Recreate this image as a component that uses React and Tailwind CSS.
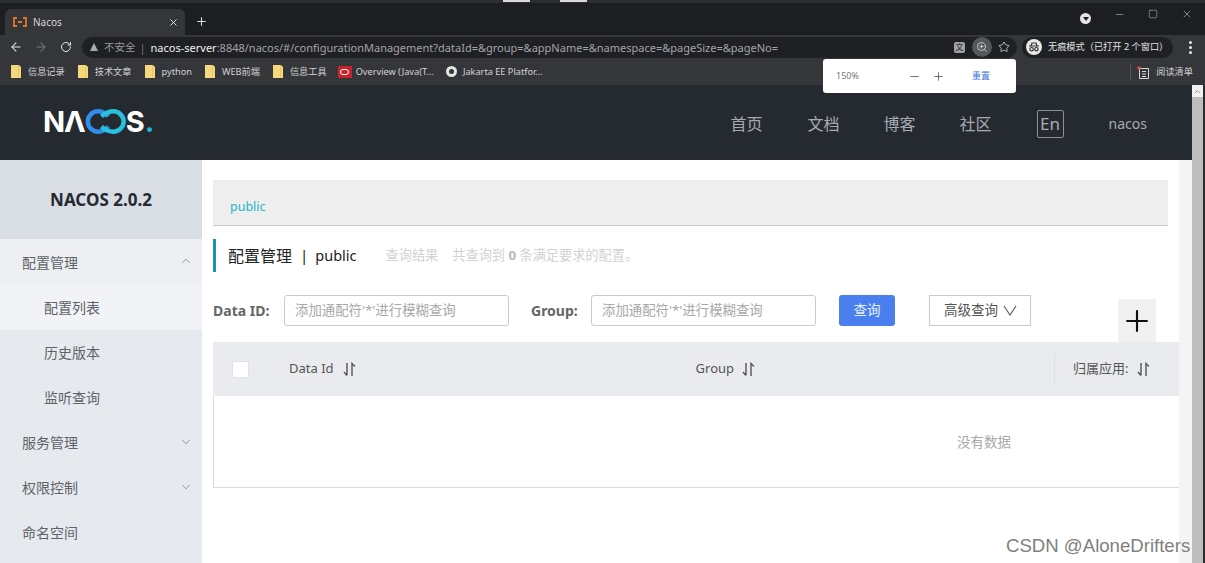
import React from "react";
import { ArrowLeft, ArrowRight, RotateCw, Star, ZoomIn, Minus, Plus, X, Square, ChevronUp, ChevronDown } from "lucide-react";

const font = "font-['Noto_Sans','Noto_Sans_CJK_SC',sans-serif]";

function Sort() {
  return (
    <svg width="13" height="15" viewBox="0 0 13 15" fill="none" stroke="#555" strokeWidth="1.4">
      <path d="M4 1v12M1 10l3 3.5" />
      <path d="M9 14V1.5l3 3" />
    </svg>
  );
}

function Bookmark({ label }) {
  return (
    <div className="flex items-center gap-[7px]">
      <svg width="10" height="13" viewBox="0 0 10 13"><path d="M0 0h8l2 2v11H0z" fill="#f5d77e" /><path d="M7 0h1v13H7z" fill="#e8c45f" /></svg>
      <span>{label}</span>
    </div>
  );
}

function SideItem({ label, sub, icon, className = "" }) {
  return (
    <div className={`h-[45px] flex items-center justify-between pr-[9px] text-[14px] text-[#5f6368] ${sub ? "pl-[44px]" : "pl-[22px]"} ${className}`}>
      <span>{label}</span>
      {icon === "up" && <ChevronUp size={14} strokeWidth={1.1} className="text-[#666] -mt-[2px]" />}
      {icon === "down" && <ChevronDown size={14} strokeWidth={1.1} className="text-[#666] -mt-[2px]" />}
    </div>
  );
}

export default function App() {
  return (
    <div className={`relative h-[563px] w-[1205px] overflow-hidden bg-white ${font}`}>
      {/* tab strip */}
      <div className="relative h-[35px] bg-[#1d1e22] border-t-[3px] border-[#2c2d31] flex items-end pl-[5px]">
        <div className="w-[180px] h-[26px] bg-[#35363a] rounded-t-[6px] flex items-center pl-[8px] pr-[6px] text-[#d5d6d8] text-[10px]">
          <svg width="14" height="10" viewBox="0 0 14 10" fill="none" stroke="#e0762f" strokeWidth="1.8"><path d="M4 1H1v8h3M10 1h3v8h-3M5 5h4" /></svg>
          <span className="ml-[6px]">Nacos</span>
          <X size={11} strokeWidth={2} className="ml-auto text-[#e8e8e8]" />
        </div>
        <Plus size={13} strokeWidth={2} className="ml-[10px] mb-[7px] text-[#e2e2e2]" />
        <div className="ml-auto flex items-center gap-[23px] pr-[12px] mb-[11px] text-[#c8c8c8]">
          <div className="w-[11px] h-[11px] rounded-full bg-[#e4e4e4] flex items-center justify-center mt-[9px]">
            <div className="w-0 h-0 border-x-[3px] border-x-transparent border-t-[4px] border-t-[#1d1e22]" />
          </div>
          <Minus size={11} strokeWidth={1.2} />
          <Square size={10} strokeWidth={1.2} />
          <X size={12} strokeWidth={1.2} />
        </div>
      </div>
      {/* toolbar */}
      <div className="h-[24px] bg-[#35363a] flex items-center pl-[9px] pr-[13px]">
        <ArrowLeft size={14} strokeWidth={1.8} className="text-[#e8e8e8]" />
        <ArrowRight size={14} strokeWidth={1.8} className="ml-[11px] text-[#77797d]" />
        <RotateCw size={12} strokeWidth={2} className="ml-[12px] text-[#e8e8e8]" />
        <div className="ml-[10px] w-[935px] h-[21px] rounded-full bg-[#1f2024] flex items-center pl-[8px] pr-[7px] text-[11px] leading-none">
          <div className="w-0 h-0 border-x-[4px] border-x-transparent border-b-[8px] border-b-[#a9abaf]" />
          <span className="ml-[6px] text-[#9a9ca0] text-[10.500px]">不安全</span>
          <span className="ml-[4px] text-[#74767a]">|</span>
          <span className="ml-[5px] text-[#f0f0f0]">nacos-server</span>
          <span className="text-[#a3a5a9]">:8848/nacos/#/configurationManagement?dataId=&amp;group=&amp;appName=&amp;namespace=&amp;pageSize=&amp;pageNo=</span>
          <span className="ml-auto w-[11px] h-[11px] rounded-[2px] bg-[#9fa1a5] text-[#1f2024] text-[8px] flex items-center justify-center">文</span>
          <span className="ml-[7px] w-[20px] h-[20px] rounded-full bg-[#55575b] flex items-center justify-center">
            <ZoomIn size={12} strokeWidth={1.5} className="text-[#e0e0e0]" />
          </span>
          <Star size={12} strokeWidth={1.5} className="ml-[6px] text-[#e0e0e0]" />
        </div>
        <div className="ml-[5px] w-[151px] h-[21px] rounded-full bg-[#1f2024] flex items-center pl-[4px] text-[9.200px] text-[#e2e2e2]">
          <span className="w-[16px] h-[16px] rounded-full bg-[#e8e8e8] flex items-center justify-center">
            <svg width="12" height="10" viewBox="0 0 12 10" fill="none" stroke="#333" strokeWidth="1.2"><path d="M1 4h10M3 4l1-3h4l1 3" /><circle cx="3.6" cy="7.2" r="1.7" /><circle cx="8.4" cy="7.2" r="1.7" /></svg>
          </span>
          <span className="ml-[6px] whitespace-nowrap">无痕模式（已打开 2 个窗口）</span>
        </div>
        <div className="ml-auto flex flex-col gap-[2px]">
          <span className="w-[3px] h-[3px] bg-[#e8e8e8] rounded-full" />
          <span className="w-[3px] h-[3px] bg-[#e8e8e8] rounded-full" />
          <span className="w-[3px] h-[3px] bg-[#e8e8e8] rounded-full" />
        </div>
      </div>
      {/* bookmarks */}
      <div className="h-[26px] bg-[#35363a] flex items-center pl-[11px] pr-[12px] text-[9.200px] text-[#d2d3d5]">
        <div className="flex items-center gap-[13px]">
          <Bookmark label="信息记录" />
          <Bookmark label="技术文章" />
          <Bookmark label="python" />
          <Bookmark label="WEB前端" />
          <Bookmark label="信息工具" />
        </div>
        <div className="ml-[11px] flex items-center gap-[4px]">
          <span className="w-[14px] h-[12px] bg-[#c8242b] flex items-center justify-center">
            <span className="w-[9px] h-[6px] rounded-full border-[1.5px] border-white" />
          </span>
          <span>Overview (Java(T...</span>
        </div>
        <div className="ml-[12px] flex items-center gap-[6px]">
          <span className="w-[11px] h-[11px] rounded-full bg-[#e4e4e4] flex items-center justify-center">
            <span className="w-[5px] h-[5px] rounded-full bg-[#35363a]" />
          </span>
          <span>Jakarta EE Platfor...</span>
        </div>
        <div className="ml-auto flex items-center h-[16px] border-l border-[#55575b] pl-[6px]">
          <svg width="13" height="13" viewBox="0 0 13 13" fill="none" stroke="#d8d8d8" strokeWidth="1"><path d="M2.500 2.500h9v10h-9zM5 5.500h4M5 8h4M5 10.500h4" /><circle cx="2" cy="2" r="1.700" fill="#d9534f" stroke="none" /></svg>
          <span className="ml-[6px]">阅读清单</span>
        </div>
      </div>
      {/* page */}
      <div className="flex h-[478px]">
        <div className="flex-1 min-w-0 flex flex-col">
          <header className="h-[75px] shrink-0 bg-[#252a31] flex items-center pl-[43px] pr-[45px]">
            <div className="flex items-center text-white text-[29px] font-bold leading-none font-['Inter',sans-serif] -mt-[2px]">
              <span>N</span>
              <span className="-ml-[1px]">Λ</span>
              <svg width="42" height="25" viewBox="0 0 36 22" fill="none" strokeWidth="4" className="-ml-[1px]">
                <path d="M20 6.500C17 3 14 2 11 2a9 9 0 0 0 0 18c3 0 6-1 9-4.500" stroke="#2f8fe8" />
                <path d="M14 15.500C18 19 21 20 24.500 20a9 9 0 0 0 0-18C21 2 18 3 14 6.500" stroke="#28c0de" />
              </svg>
              <span className="-ml-[1px]">S</span>
              <span className="text-[#1fb8d8]">.</span>
            </div>
            <nav className="ml-auto mt-[2px] flex items-center text-[16px] text-[#a7abb0]">
              <span>首页</span>
              <span className="ml-[45px]">文档</span>
              <span className="ml-[44px]">博客</span>
              <span className="ml-[44px]">社区</span>
              <span className="ml-[45px] w-[27px] h-[28px] border border-[#8d9196] rounded-[2px] flex items-center justify-center text-[17px]">En</span>
              <span className="ml-[45px] text-[14px]">nacos</span>
            </nav>
          </header>
          <div className="flex flex-1 min-h-0">
            <aside className="w-[202px] shrink-0 bg-[#e6eaef]">
              <div className="h-[79px] bg-[#d9dee5] flex items-center justify-center text-[17px] font-bold text-[#252a31]">NACOS 2.0.2</div>
              <SideItem label="配置管理" icon="up" className="h-[46px] bg-[#edeff3]" />
              <SideItem label="配置列表" sub className="bg-[#f1f3f6]" />
              <SideItem label="历史版本" sub />
              <SideItem label="监听查询" sub />
              <SideItem label="服务管理" icon="down" />
              <SideItem label="权限控制" icon="down" />
              <SideItem label="命名空间" />
            </aside>
            <main className="w-[977px] shrink-0 pl-[11px] pt-[20px]">
              <div className="w-[955px] h-[46px] bg-[#eeeeee] border-b border-[#c8c8c8] flex items-center pl-[17px] pt-[10px] text-[12.500px] text-[#27b4cc]">public</div>
              <div className="mt-[13px] h-[33px] border-l-[3px] border-[#1f8fc0] flex items-center pl-[12px]">
                <span className="text-[16px] text-[#222]">配置管理</span>
                <span className="mx-[8px] text-[15px] text-[#222]">|</span>
                <span className="text-[14.500px] text-[#222] -ml-[1px]">public</span>
                <span className="ml-[29px] text-[13.200px] text-[#d0d2d5]">查询结果</span>
                <span className="ml-[14px] text-[13.200px] text-[#d0d2d5]">共查询到 <b className="text-[#b6b8bb]">0</b> 条满足要求的配置。</span>
              </div>
              <div className="mt-[23px] flex items-start">
                <span className="h-[31px] leading-[31px] w-[71px] text-[14px] font-bold text-[#666]">Data ID:</span>
                <div className="w-[225px] h-[31px] border border-[#c9cbce] rounded-[3px] flex items-center pl-[10px] text-[13.400px] text-[#a8a8a8]">添加通配符'*'进行模糊查询</div>
                <span className="ml-[22px] w-[60px] h-[31px] leading-[31px] text-[14px] font-bold text-[#666]">Group:</span>
                <div className="w-[225px] h-[31px] border border-[#c9cbce] rounded-[3px] flex items-center pl-[10px] text-[13.400px] text-[#a8a8a8]">添加通配符'*'进行模糊查询</div>
                <div className="ml-[23px] w-[56px] h-[31px] bg-[#4a7ff0] rounded-[3px] flex items-center justify-center text-[13.500px] text-[#e6efff]">查询</div>
                <div className="ml-[34px] w-[102px] h-[31px] border border-[#c9cbce] flex items-center pl-[14px] gap-[5px] text-[13.500px] text-[#555]">
                  高级查询
                  <svg width="14" height="11" viewBox="0 0 14 11" fill="none" stroke="#555" strokeWidth="1.1"><path d="M1 1l6 9 6-9" /></svg>
                </div>
                <div className="ml-[87px] mt-[4px] w-[38px] h-[43px] bg-[#f1f1f2] flex items-center justify-center">
                  <Plus size={34} strokeWidth={1.5} className="text-[#111]" />
                </div>
              </div>
              <div className="w-[966px] h-[54px] bg-[#e9ebef] flex items-center text-[13px] text-[#555]">
                <span className="ml-[19px] w-[17px] h-[17px] bg-white rounded-[2px] border border-[#e0e2e6]" />
                <span className="ml-[40px]">Data Id</span>
                <span className="ml-[9px] flex"><Sort /></span>
                <span className="ml-[340px]">Group</span>
                <span className="ml-[8px] flex"><Sort /></span>
                <div className="ml-auto w-[125px] h-[32px] border-l border-[#dcdee2] flex items-center pl-[18px]">
                  归属应用:
                  <span className="ml-[9px] flex"><Sort /></span>
                </div>
              </div>
              <div className="w-[966px] h-[92px] border-l border-b border-[#dcdcdc] flex items-center justify-end pt-[1px] pr-[168px] text-[13.500px] text-[#a8a8a8]">没有数据</div>
            </main>
            <div className="flex-1 bg-[#f4f4f4]" />
          </div>
        </div>
        {/* scrollbar */}
        <div className="w-[13px] shrink-0 bg-[#f1f1f1] flex flex-col border-r-[2px] border-[#2a2a2a]">
          <div className="h-[12px] flex items-center justify-center"><ChevronUp size={9} strokeWidth={2} className="text-[#777]" /></div>
          <div className="flex-1 bg-[#bdbdbd]" />
        </div>
      </div>
      {/* zoom bubble */}
      <div className="absolute left-[823px] top-[59px] w-[193px] h-[34px] bg-white rounded-[3px] flex items-center pl-[13px] text-[9px] text-[#777]">
        <span>150%</span>
        <Minus size={13} strokeWidth={1.500} className="ml-[49px] text-[#555]" />
        <Plus size={13} strokeWidth={1.500} className="ml-[11px] text-[#555]" />
        <span className="ml-[27px] text-[#3f73d8]">重置</span>
      </div>
      {/* watermark */}
      <div className="absolute left-[1006px] top-[534px] text-[18.600px] leading-[24px] text-[#808080] whitespace-nowrap font-['Liberation_Sans',sans-serif]">CSDN @AloneDrifters</div>
      {/* leftovers at top edge */}
      <div className="absolute left-[503px] top-0 w-[27px] h-[2px] bg-[#d8d8d8]" />
      <div className="absolute left-[560px] top-0 w-[27px] h-[2px] bg-[#d8d8d8]" />
    </div>
  );
}
